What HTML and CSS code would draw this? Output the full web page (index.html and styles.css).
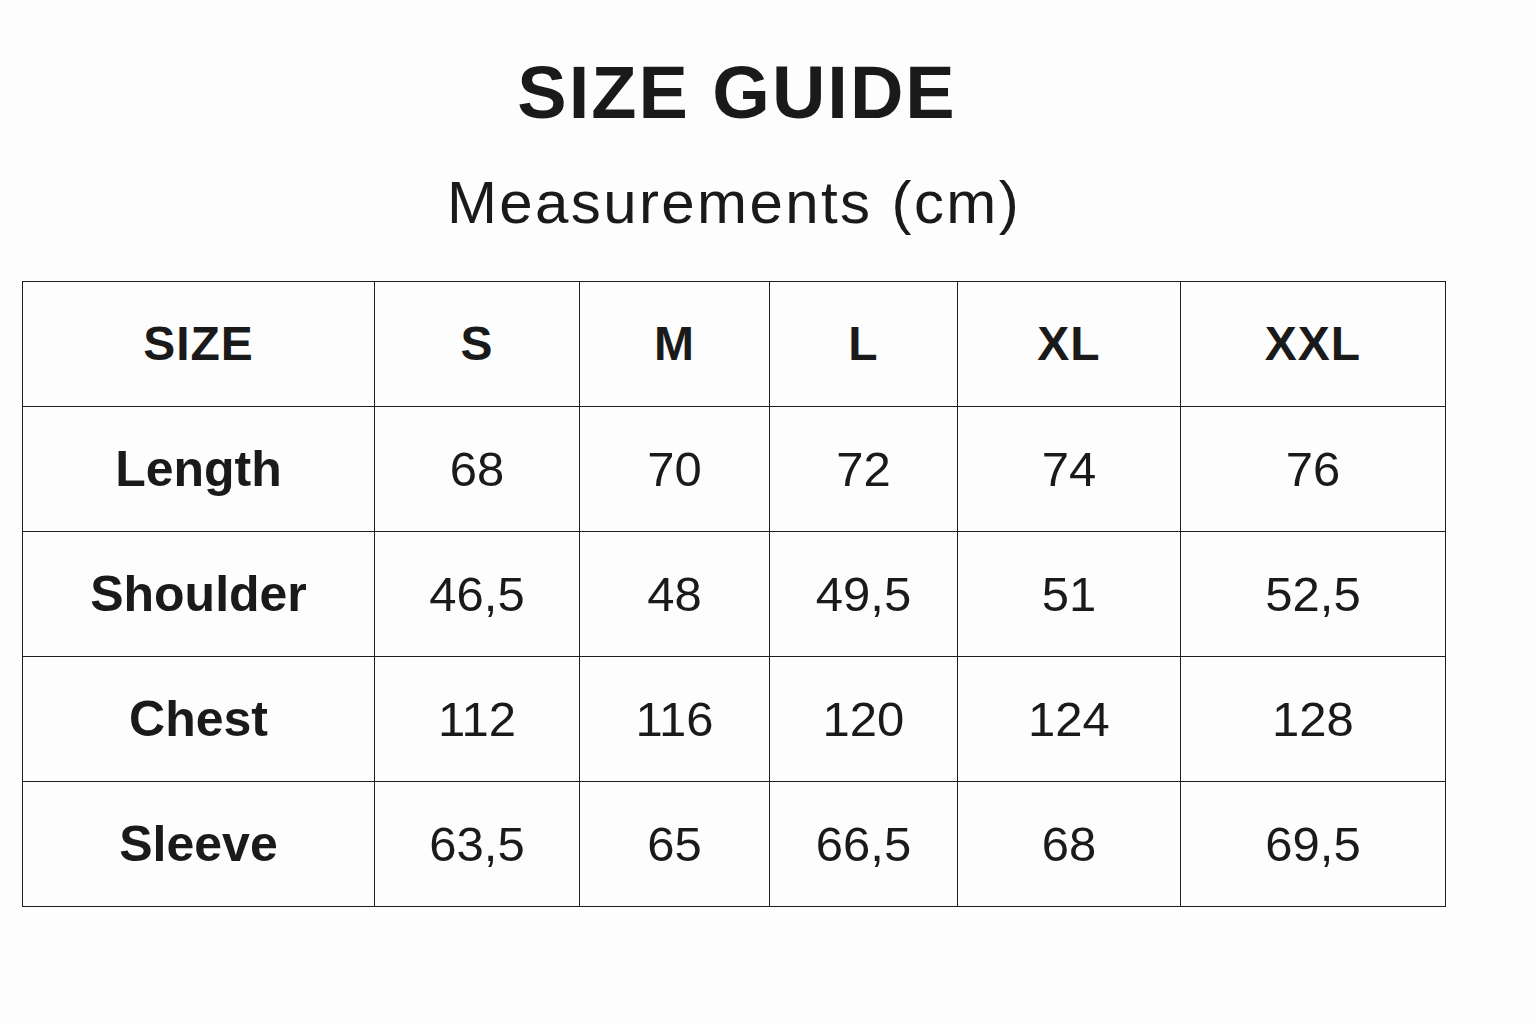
FILE: index.html
```html
<!DOCTYPE html>
<html lang="en">
<head>
<meta charset="utf-8">
<title>Size Guide</title>
<link rel="stylesheet" href="styles.css">
</head>
<body>
<main class="page">
  <header class="heading">
    <h1 class="title">SIZE GUIDE</h1>
    <p class="subtitle">Measurements (cm)</p>
  </header>
  <table class="sizes">
    <colgroup>
      <col class="c-label">
      <col class="c-s">
      <col class="c-m">
      <col class="c-l">
      <col class="c-xl">
      <col class="c-xxl">
    </colgroup>
    <thead>
      <tr><th>SIZE</th><th>S</th><th>M</th><th>L</th><th>XL</th><th>XXL</th></tr>
    </thead>
    <tbody>
      <tr><th>Length</th><td>68</td><td>70</td><td>72</td><td>74</td><td>76</td></tr>
      <tr><th>Shoulder</th><td>46,5</td><td>48</td><td>49,5</td><td>51</td><td>52,5</td></tr>
      <tr><th>Chest</th><td>112</td><td>116</td><td>120</td><td>124</td><td>128</td></tr>
      <tr><th>Sleeve</th><td>63,5</td><td>65</td><td>66,5</td><td>68</td><td>69,5</td></tr>
    </tbody>
  </table>
</main>
</body>
</html>
```

FILE: styles.css
```css
html, body {
  margin: 0;
  padding: 0;
  background: #fdfdfd;
}
body {
  font-family: "Liberation Sans", Arial, sans-serif;
  color: #1a1a1a;
}
.page {
  width: 1424px;
  margin-left: 22px;
  padding-top: 56px;
}
.heading {
  display: flex;
  flex-direction: column;
  align-items: center;
}
.title {
  margin: 0 0 0 6px;
  font-size: 74px;
  line-height: 1;
  font-weight: 700;
  letter-spacing: 2px;
}
.subtitle {
  margin: 43px 0 0;
  font-size: 60px;
  line-height: 1;
  font-weight: 400;
  letter-spacing: 2.4px;
}
.sizes {
  margin-top: 48px;
  width: 1424px;
  border-collapse: collapse;
  table-layout: fixed;
}
.c-label { width: 352px; }
.c-s { width: 205px; }
.c-m { width: 190px; }
.c-l { width: 188px; }
.c-xl { width: 223px; }
.c-xxl { width: 265px; }
.sizes th, .sizes td {
  border: 1.5px solid #1e1e1e;
  height: 124px;
  padding: 0;
  text-align: center;
  vertical-align: middle;
  line-height: 1;
}
.sizes tbody th {
  font-weight: 700;
  font-size: 50px;
}
.sizes thead th {
  font-weight: 700;
  font-size: 48px;
  letter-spacing: 1px;
}
.sizes td {
  font-weight: 400;
  font-size: 49px;
}
```
